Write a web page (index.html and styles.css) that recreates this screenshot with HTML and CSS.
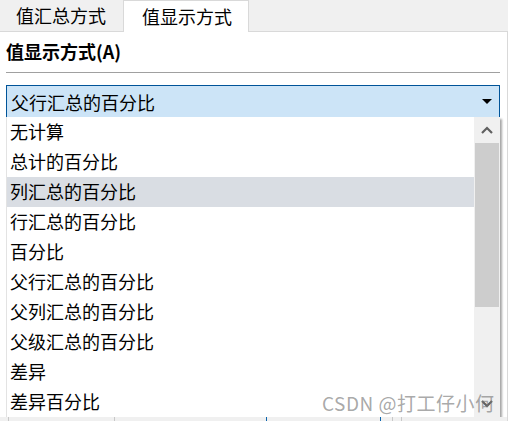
FILE: index.html
```html
<!DOCTYPE html>
<html lang="zh-CN">
<head>
    <meta charset="UTF-8">
    <title>值显示方式</title>
    <link rel="stylesheet" href="styles.css">
</head>
<body>
    <div class="dialog">
        <div class="tabs">
            <div class="tab">值汇总方式</div>
            <div class="tab active">值显示方式</div>
        </div>

        <div class="panel">
            <div class="label">值显示方式(A)</div>
            <div class="rule"></div>

            <div class="combo">
                <span>父行汇总的百分比</span>
                <span class="caret"></span>
            </div>

            <div class="dropdown">
                <ul class="options">
                    <li>无计算</li>
                    <li>总计的百分比</li>
                    <li class="hover">列汇总的百分比</li>
                    <li>行汇总的百分比</li>
                    <li>百分比</li>
                    <li>父行汇总的百分比</li>
                    <li>父列汇总的百分比</li>
                    <li>父级汇总的百分比</li>
                    <li>差异</li>
                    <li>差异百分比</li>
                </ul>
                <div class="scrollbar">
                    <div class="scroll-btn">
                        <svg width="14" height="10" viewBox="0 0 14 10"><path d="M2 8 L7 3 L12 8" fill="none" stroke="#606060" stroke-width="2.2"/></svg>
                    </div>
                    <div class="thumb"></div>
                    <div class="track"></div>
                    <div class="scroll-btn">
                        <svg width="14" height="10" viewBox="0 0 14 10"><path d="M2 2 L7 7 L12 2" fill="none" stroke="#606060" stroke-width="2.2"/></svg>
                    </div>
                </div>
            </div>

            <div class="below">
                <div class="cell"></div>
                <div class="cell w1"></div>
                <div class="cell w2"></div>
                <div class="cell w3 blue"></div>
                <div class="cell w4 blue"></div>
                <div class="cell"></div>
            </div>
        </div>

        <div class="watermark">CSDN @打工仔小何</div>
    </div>
</body>
</html>
```

FILE: styles.css
```css
* {
    box-sizing: border-box;
}

body {
    margin: 0;
    padding: 0;
    background: #ffffff;
    font-family: "Noto Sans CJK SC", "Noto Sans", sans-serif;
    font-size: 18px;
    color: #000;
}

.dialog {
    position: relative;
    width: 508px;
    height: 421px;
    overflow: hidden;
}

.tabs {
    display: flex;
    align-items: flex-end;
    height: 32px;
    background: #f0f0f0;
    border-bottom: 1px solid #d9d9d9;
}

.tab {
    width: 123px;
    height: 30px;
    line-height: 29px;
    padding-left: 16px;
}

.tab.active {
    width: 126px;
    height: 32px;
    line-height: 31px;
    margin-bottom: -1px;
    padding-left: 18px;
    background: #fff;
    border: 1px solid #d9d9d9;
    border-bottom: none;
}

.panel {
    background: #fff;
    border-right: 1px solid #d9d9d9;
    height: 389px;
    padding: 0 7px 0 6px;
}

.label {
    font-weight: bold;
    height: 40px;
    line-height: 39px;
}

.rule {
    height: 1px;
    background: #a0a0a0;
    margin-bottom: 12px;
}

.combo {
    display: flex;
    justify-content: space-between;
    align-items: center;
    height: 32px;
    padding: 0 7px 0 4px;
    background: #cce4f7;
    border: 1px solid #005499;
    border-bottom: none;
}

.caret {
    width: 0;
    height: 0;
    border-left: 5px solid transparent;
    border-right: 5px solid transparent;
    border-top: 5px solid #000;
}

.dropdown {
    display: flex;
    height: 300px;
    background: #fff;
    border-left: 1px solid #e3e3e3;
    box-shadow: 2px 2px 2px rgba(0, 0, 0, 0.35);
}

.options {
    flex: 1;
    list-style: none;
    margin: 0;
    padding: 0;
}

.options li {
    height: 30px;
    line-height: 29px;
    padding-left: 3px;
}

.options li.hover {
    background: #d9dde3;
}

.scrollbar {
    width: 26px;
    display: flex;
    flex-direction: column;
    background: #f0f0f0;
}

.scroll-btn {
    height: 26px;
    display: flex;
    align-items: center;
    justify-content: center;
}

.thumb {
    height: 164px;
    margin: 0 1px;
    background: #cdcdcd;
}

.track {
    flex: 1;
}

.below {
    display: flex;
    height: 8px;
    margin: 0 -7px 0 -6px;
    background: #f0f0f0;
}

.cell {
    width: 9px;
    border-right: 1px solid #c8c8c8;
}

.cell.w1 { width: 106px; }
.cell.w2 { width: 152px; border-right-color: #0a64ad; }
.cell.w3 { width: 114px; border-right-color: #0a64ad; }
.cell.w4 { width: 12px; }

.watermark {
    position: absolute;
    left: 322px;
    top: 390px;
    font-size: 19px;
    line-height: 26px;
    color: rgba(120, 120, 120, 0.65);
    letter-spacing: 0.5px;
}
```
